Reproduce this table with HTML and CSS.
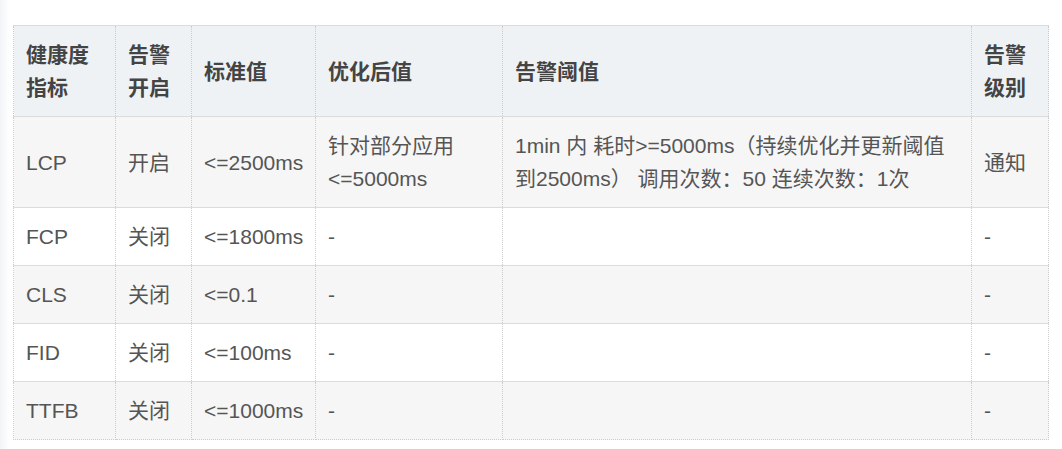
FILE: index.html
```html
<!DOCTYPE html>
<html lang="zh-CN">
<head>
<meta charset="utf-8">
<title>健康度指标</title>
<link rel="stylesheet" href="styles.css">
</head>
<body>
<div class="page">
  <table class="metrics">
    <colgroup>
      <col class="c1"><col class="c2"><col class="c3"><col class="c4"><col class="c5"><col class="c6">
    </colgroup>
    <thead>
      <tr>
        <th>健康度指标</th>
        <th>告警开启</th>
        <th>标准值</th>
        <th>优化后值</th>
        <th>告警阈值</th>
        <th>告警级别</th>
      </tr>
    </thead>
    <tbody>
      <tr>
        <td>LCP</td>
        <td>开启</td>
        <td>&lt;=2500ms</td>
        <td>针对部分应用&lt;=5000ms</td>
        <td>1min 内 耗时&gt;=5000ms（持续优化并更新阈值到2500ms） 调用次数：50 连续次数：1次</td>
        <td>通知</td>
      </tr>
      <tr>
        <td>FCP</td>
        <td>关闭</td>
        <td>&lt;=1800ms</td>
        <td>-</td>
        <td></td>
        <td>-</td>
      </tr>
      <tr>
        <td>CLS</td>
        <td>关闭</td>
        <td>&lt;=0.1</td>
        <td>-</td>
        <td></td>
        <td>-</td>
      </tr>
      <tr>
        <td>FID</td>
        <td>关闭</td>
        <td>&lt;=100ms</td>
        <td>-</td>
        <td></td>
        <td>-</td>
      </tr>
      <tr>
        <td>TTFB</td>
        <td>关闭</td>
        <td>&lt;=1000ms</td>
        <td>-</td>
        <td></td>
        <td>-</td>
      </tr>
    </tbody>
  </table>
</div>
</body>
</html>
```

FILE: styles.css
```css
html, body {
  margin: 0;
  padding: 0;
}

body {
  background: linear-gradient(to right, #f2f4f7 0, #fafbfc 6px, #ffffff 10px);
  font-family: "Liberation Sans", Arial, "Noto Sans CJK SC", sans-serif;
  color: #555;
}

.page {
  padding: 25px 14px 0 13px;
}

.metrics {
  width: 1035px;
  table-layout: fixed;
  border-collapse: collapse;
  font-size: 21px;
  line-height: 33px;
}

.c1 { width: 102px; }
.c2 { width: 76px; }
.c3 { width: 124px; }
.c4 { width: 187px; }
.c5 { width: 469px; }
.c6 { width: 77px; }

.metrics th,
.metrics td {
  border: 1px dotted #ccc;
  padding: 12px 12px;
  text-align: left;
  vertical-align: middle;
  word-break: normal;
}

.metrics tr {
  border-top: 1px solid #dcdcdc;
}

.metrics thead tr {
  background: #eff2f5;
}

.metrics th {
  font-weight: bold;
  color: #444;
}

.metrics tbody tr:nth-child(odd) {
  background: #f6f6f6;
}

.metrics tbody tr:nth-child(even) {
  background: #ffffff;
}
```
